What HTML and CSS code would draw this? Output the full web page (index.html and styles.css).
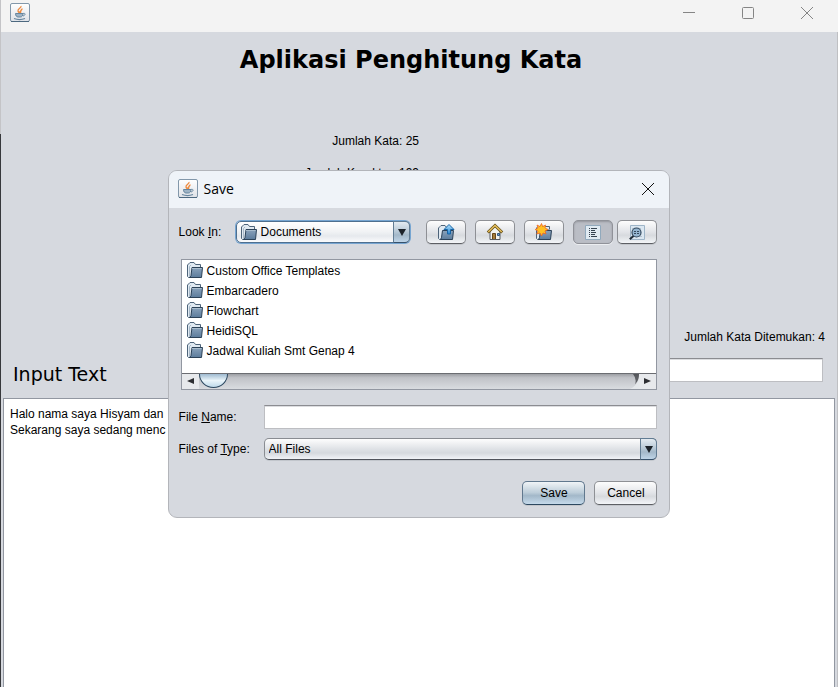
FILE: index.html
```html
<!DOCTYPE html>
<html lang="id">
<head>
<meta charset="utf-8">
<title>Aplikasi Penghitung Kata</title>
<link rel="stylesheet" href="styles.css">
</head>
<body>
<svg class="defs" aria-hidden="true">
  <defs>
    <linearGradient id="steel" x1="0" y1="0" x2="0" y2="1"><stop offset="0" stop-color="#8ba3bc"/><stop offset="1" stop-color="#5c7c9c"/></linearGradient>
    <linearGradient id="tile" x1="0" y1="0" x2="0" y2="1"><stop offset="0" stop-color="#fff"/><stop offset="1" stop-color="#dfe2e7"/></linearGradient>
    <linearGradient id="up" x1="0" y1="0" x2="0" y2="1"><stop offset="0" stop-color="#b5e4ff"/><stop offset="1" stop-color="#2583cf"/></linearGradient>
    <symbol id="java" viewBox="0 0 20 20">
      <rect x=".5" y=".5" width="19" height="18" rx="1.5" fill="url(#tile)" stroke="#8297aa"/>
      <path d="M1 18.5h18" stroke="#4c687f"/>
      <path d="M11 3c.6 2-3.600 2.600-3 5 .2 1 1 1.500 1.500 2-.2-2 3-2.500 2.500-4.500M12 6c-2 1.500-1 2.500-1.500 4" fill="none" stroke="#ee8a3e" stroke-width="1.300"/>
      <path d="M5.500 10.500h7.500c0 2-1 3.500-2.500 3.500H8c-1.500 0-2.500-1.500-2.500-3.500z" fill="#9db3c5" stroke="#66859e"/>
      <path d="M4 15.500c3 1.200 8 1.200 11 0" fill="none" stroke="#66859e" stroke-width="1.200"/>
      <path d="M13 10.500c3-.8 2.500 2 0 2.500" fill="none" stroke="#66859e"/>
    </symbol>
    <symbol id="folder" viewBox="0 0 16 16">
      <path d="M.5 14.500V3L1.500 2 3 .5h4L8.500 2.500H13.500V5L3 15.500H1.500z" fill="#e0e9f1" stroke="#4d6379"/>
      <path d="M2.500 14V4.500L4 3" fill="none" stroke="#a9bac9"/>
      <path d="M5 5.500h10.500L14.500 15.500H2.500L4 13.500z" fill="url(#steel)" stroke="#2c4258"/>
      <path d="M5 6.500h9.500" stroke="#a8bccd"/>
    </symbol>
  </defs>
</svg>

<div class="window">
  <header class="titlebar">
    <svg class="java" aria-hidden="true"><use href="#java"/></svg>
    <div class="controls">
      <button aria-label="Minimize"><svg width="12" height="12"><path d="M0 5.500h12"/></svg></button>
      <button aria-label="Maximize"><svg width="12" height="12"><rect x=".5" y=".5" width="11" height="11" rx="1"/></svg></button>
      <button aria-label="Close"><svg width="12" height="12"><path d="M0 0l12 12M12 0L0 12"/></svg></button>
    </div>
  </header>
  <main class="app">
    <h1>Aplikasi Penghitung Kata</h1>
    <div class="counts">
      <p>Jumlah Kata: 25</p>
      <p>Jumlah Karakter: 199</p>
    </div>
    <p class="found">Jumlah Kata Ditemukan: 4</p>
    <div class="search">
      <label class="heading" for="text">Input Text</label>
      <input class="field" type="text" aria-label="Cari kata">
    </div>
    <textarea id="text" spellcheck="false">Halo nama saya Hisyam dan
Sekarang saya sedang menc</textarea>
  </main>
</div>

<div class="overlay">
  <section class="dialog" role="dialog" aria-labelledby="dialog-title">
    <header class="dialog-bar">
      <svg class="java" aria-hidden="true"><use href="#java"/></svg>
      <h2 id="dialog-title">Save</h2>
      <button class="close" aria-label="Close"><svg width="12" height="12"><path d="M0 0l12 12M12 0L0 12"/></svg></button>
    </header>
    <div class="dialog-body">
      <div class="look">
        <label for="look">Look <u>I</u>n:</label>
        <div class="combo focused">
          <svg class="folder" aria-hidden="true"><use href="#folder"/></svg>
          <select id="look"><option>Documents</option></select>
          <span class="drop"></span>
        </div>
        <div class="tools">
          <button class="btn" aria-label="Up One Level"><svg viewBox="0 0 16 16">
            <path d="M.5 14.500V4L2 2.500 3 1.500h4L8.500 3.500V6L3 15.500H1.500z" fill="#e0e9f1" stroke="#4d6379"/>
            <path d="M4.500 6.500h11L14.500 15.500H2.500L3.500 13.500z" fill="url(#steel)" stroke="#2c4258"/>
            <path d="M11 .5l5 5h-3.500v4.500h-3V5.500H6z" fill="url(#up)" stroke="#1764a5"/></svg></button>
          <button class="btn" aria-label="Home"><svg viewBox="0 0 16 16">
            <path d="M3 7l5-5 5 5v8.500H3z" fill="#f4f4f0" stroke="#565a60"/>
            <path d="M.8 8.500L8 1.500l7.200 7" fill="none" stroke="#665018" stroke-width="3"/>
            <path d="M1.200 8L8 1.500 14.800 8" fill="none" stroke="#e8c05c" stroke-width="1.400"/>
            <path d="M5.500 15V9.500h3V15" fill="#a67c38" stroke="#68481c"/>
            <path d="M10.500 9.500h2v2h-2z" fill="#6d9ed1" stroke="#31577f"/></svg></button>
          <button class="btn" aria-label="Create New Folder"><svg viewBox="0 0 16 16">
            <path d="M.5 14.500V4L2 2.500h11.500V5L3 15.500H1.500z" fill="#e0e9f1" stroke="#4d6379"/>
            <path d="M4.500 6.500h11L14.500 15.500H2.500L3.500 13.500z" fill="url(#steel)" stroke="#2c4258"/>
            <path d="M5.500-.5l1.200 3L9.500 1 9 4l3 1.500L9 7l1 3-3-1-1.500 3L4 9 .8 10 2 7-.8 5.500 2 4 1 1l3 1.500z" fill="#ffc122" stroke="#ee6724" stroke-width=".8"/></svg></button>
          <button class="btn pressed" aria-label="List" aria-pressed="true"><svg viewBox="0 0 16 16">
            <path d="M.5 1.500h15v14H.5z" fill="#e0eaf2" stroke="#91a9bc"/>
            <path d="M4 4.500h1M4 6.500h1M4 8.500h1M4 10.500h1M4 12.500h1M6 4.500h6M6 6.500h4M6 8.500h5M6 10.500h4M6 12.500h6" stroke="#35424f"/></svg></button>
          <button class="btn" aria-label="Details"><svg viewBox="0 0 16 16">
            <path d="M1.500 1.500h14v14h-14z" fill="#dbe7f1" stroke="#9eb5c8"/>
            <path d="M3 4.500h9M3 12.500h10" stroke="#b3c3d1"/>
            <path d="M5 11.500L.8 15.200" stroke="#202c37" stroke-width="2"/>
            <circle cx="7.500" cy="8.500" r="4.500" fill="#94b5d0" stroke="#34495d" stroke-width="1.200"/>
            <path d="M5 7.500h2M8 7.500h2M5 9.500h2M8 9.500h2" stroke="#34495d"/></svg></button>
        </div>
      </div>
      <div class="files">
        <ul>
          <li><svg class="folder" aria-hidden="true"><use href="#folder"/></svg>Custom Office Templates</li>
          <li><svg class="folder" aria-hidden="true"><use href="#folder"/></svg>Embarcadero</li>
          <li><svg class="folder" aria-hidden="true"><use href="#folder"/></svg>Flowchart</li>
          <li><svg class="folder" aria-hidden="true"><use href="#folder"/></svg>HeidiSQL</li>
          <li><svg class="folder" aria-hidden="true"><use href="#folder"/></svg>Jadwal Kuliah Smt Genap 4</li>
        </ul>
        <div class="scroll">
          <button aria-label="Scroll left"><svg width="7" height="6"><path d="M7 0v6L0 3z"/></svg></button>
          <div class="track"><span class="thumb"></span><svg class="cap" width="9" height="15"><path d="M9 0v15H0Q9 11 9 0z" fill="#e5e8eb"/><path d="M3 0h6Q9 7 5 10 7 5 3 0z" fill="#3c3e42" opacity=".75"/></svg></div>
          <button aria-label="Scroll right"><svg width="7" height="6"><path d="M0 0v6L7 3z"/></svg></button>
        </div>
      </div>
      <div class="form">
        <label for="name">File <u>N</u>ame:</label>
        <input class="field" id="name" type="text">
        <label for="type">Files of <u>T</u>ype:</label>
        <div class="combo">
          <select id="type"><option>All Files</option></select>
          <span class="drop"></span>
        </div>
      </div>
      <div class="actions">
        <button class="btn primary">Save</button>
        <button class="btn">Cancel</button>
      </div>
    </div>
  </section>
</div>
</body>
</html>
```
FILE: styles.css
```css
* { box-sizing: border-box; margin: 0; padding: 0; }
body {
  background: #d6d9df;
  color: #000;
  font: 12px/16px "Liberation Sans", Arial, sans-serif;
}
button, input, select, textarea { font: inherit; color: inherit; }
button { border: 0; background: none; }
.defs { position: absolute; width: 0; height: 0; }
.java { width: 20px; height: 20px; flex: none; }
.folder { width: 16px; height: 16px; flex: none; overflow: visible; }

.window {
  display: flex;
  flex-direction: column;
  height: 100vh;
  overflow: hidden;
  border: solid #bfc0c3;
  border-width: 0 1px;
  border-image: linear-gradient(#c4c4c7 135px, #37383c 135px) 1;
  border-right: 0;
  box-shadow: inset -1px 0 #bfc0c3;
}
.titlebar {
  display: flex;
  justify-content: space-between;
  height: 32px;
  padding: 3px 25px 0 9px;
  background: #f3f3f3;
}
.controls { display: flex; gap: 47px; padding-top: 4px; }
.controls button { height: 12px; }
.controls svg, .close svg { display: block; fill: none; stroke: #858585; overflow: visible; }
.app { flex: 1; display: flex; flex-direction: column; padding: 0 3px 0 2px; }
h1 {
  padding: 12px 16px 0 0;
  text-align: center;
  font: bold 24px/32px "DejaVu Sans", Verdana, sans-serif;
}
.counts {
  display: grid;
  gap: 16px;
  width: 50%;
  padding-top: 57px;
  text-align: right;
}
.found { margin-top: 148px; padding-right: 10px; text-align: right; }
.search {
  display: flex;
  justify-content: space-between;
  padding: 13px 12px 8px 10px;
}
.heading { font: 19px/32px "DejaVu Sans", Verdana, sans-serif; }
.field {
  height: 24px;
  padding: 0 6px;
  border: 1px solid #bdbec2;
  border-top-color: #8b8c91;
  background: #fff;
  box-shadow: inset 0 1px #dcdde0;
  outline: 0;
}
.search .field { width: 30%; }
textarea {
  flex: 1;
  width: 100%;
  padding: 7px 6px;
  border: 1px solid #9297a1;
  border-bottom: 0;
  background: #fff;
  resize: none;
  outline: 0;
}

.overlay { position: fixed; inset: 0; display: grid; place-items: center; }
.dialog {
  width: 60%;
  min-width: 480px;
  overflow: hidden;
  border: 1px solid #b3b5ba;
  border-radius: 9px;
  background: #d6d9df;
}
.dialog-bar {
  display: flex;
  align-items: center;
  gap: 6px;
  height: 37px;
  padding: 0 15px 0 9px;
  background: #eff3f8;
}
h2 { flex: 1; font: 14px/20px "Open Sans", "Noto Sans", sans-serif; }
.close svg { stroke: #111; }
.dialog-body { padding: 12px 12px 12px 10px; }

.look { display: grid; grid-template-columns: 56px 1fr auto; align-items: center; }
.tools { display: flex; gap: 9px; margin-left: 15px; }
.tools .pressed { margin-right: -5px; }
.btn {
  display: flex;
  align-items: center;
  justify-content: center;
  height: 24px;
  border: 1px solid #8e9095;
  border-bottom-color: #5d5f64;
  border-radius: 5px;
  background: linear-gradient(#fdfdfd, #e2e4e8 50%, #d7dade 65%, #f3f5f8);
  box-shadow: 0 1px #c3c6cb;
}
.tools .btn { width: 40px; }
.tools svg { width: 16px; height: 16px; overflow: visible; }
.btn.pressed { border-color: #909299; background: #babdc5; box-shadow: inset 0 1px 2px #94969d, 0 1px #eceef1; }
.btn.primary {
  border-color: #61788e;
  border-bottom-color: #2c4860;
  background: linear-gradient(#f0f4f7, #bdcdd9 48%, #a3b8c9 62%, #c5daeb);
}

.combo {
  position: relative;
  display: flex;
  height: 22px;
  border: 1px solid #898c92;
  border-bottom-color: #50545c;
  border-radius: 5px;
  background: linear-gradient(#fdfdfd, #dfe2e6 50%, #d5d9de 70%, #f0f3f7);
  box-shadow: 0 1px #c2c6cc;
}
.combo select {
  flex: 1;
  min-width: 0;
  padding-left: 4px;
  border: 0;
  outline: 0;
  background: none;
  appearance: none;
}
.combo .folder { position: absolute; left: 4px; top: 2px; }
.combo .drop {
  position: absolute;
  inset: -1px -1px -1px auto;
  width: 17px;
  border: 1px solid #617c93;
  border-bottom-color: #36516b;
  border-radius: 0 5px 5px 0;
  background: linear-gradient(#e4ebf1, #b4c6d4 50%, #a3b8c9 65%, #bfd5e8);
  pointer-events: none;
}
.combo .drop::after {
  content: "";
  display: block;
  width: 0;
  margin: 7px auto 0;
  border: solid transparent;
  border-width: 7px 4px 0;
  border-top-color: #1c232a;
}
.focused {
  margin: 0 1px;
  border-color: #4e6f8f;
  background: linear-gradient(#fff, #f0f2f4 50%, #e6e9ed 70%, #fafbfc);
  box-shadow: 0 0 0 1px #76a5d1;
}
.focused select { padding-left: 24px; }

.files { margin: 15px 0 15px 2px; border: 1px solid #9297a1; background: #fff; }
ul { list-style: none; padding: 1px 0 12px; }
li { display: flex; align-items: center; gap: 4px; height: 20px; padding-left: 5px; }
li .folder { margin-top: -2px; }
.scroll { display: flex; height: 16px; border-top: 1px solid #6b6d72; background: #e7e9ec; }
.scroll button { display: grid; place-items: center; width: 17px; }
.scroll svg { display: block; fill: #2d2e32; }
.track {
  flex: 1;
  display: flex;
  justify-content: space-between;
  overflow: hidden;
  background: linear-gradient(#9d9fa4, #c0c2c7 25%, #d9dce0);
}
.thumb {
  width: 29px;
  height: 28px;
  margin-top: -14px;
  border: 1px solid #2c4860;
  border-radius: 50%;
  background: linear-gradient(#9fbad0 50%, #eaf5fa 75%, #bfdaea);
}

.form {
  display: grid;
  grid-template-columns: 76px 1fr;
  column-gap: 9px;
  row-gap: 9px;
  align-items: center;
  white-space: nowrap;
}
.actions { display: flex; justify-content: flex-end; gap: 9px; margin-top: 21px; }
.actions .btn { width: 63px; }
```
